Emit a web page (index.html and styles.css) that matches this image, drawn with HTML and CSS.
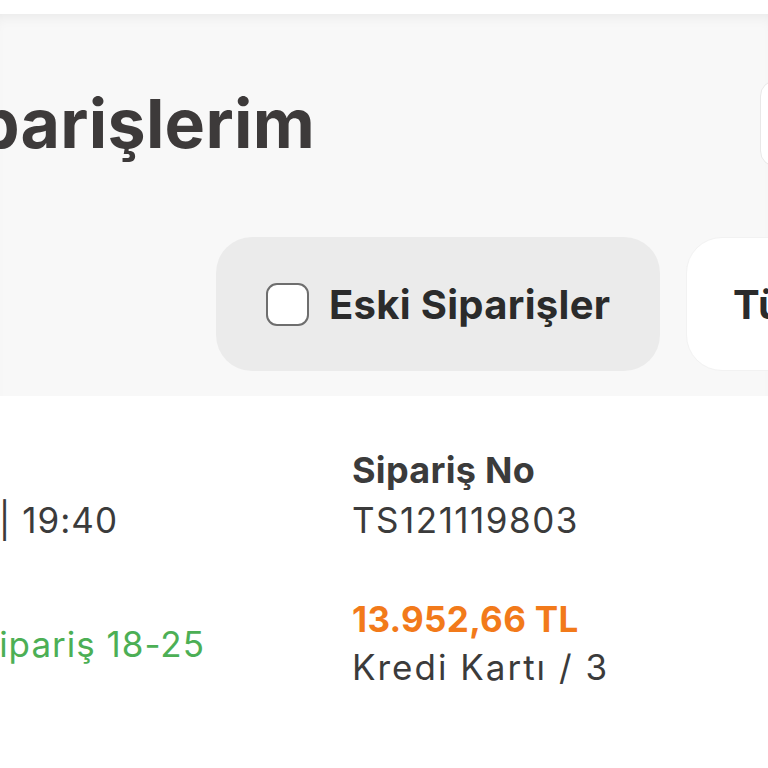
FILE: index.html
```html
<!DOCTYPE html>
<html lang="tr">
<head>
<meta charset="utf-8">
<link rel="stylesheet" href="styles.css">
</head>
<body>
<div class="topbar"></div>
<header class="header">
  <div class="title-row">
    <div class="title-wrap"><h1 class="title">Siparişlerim</h1></div>
    <div class="search-box"></div>
  </div>
  <div class="filter-row">
    <label class="pill pill-old">
      <span class="checkbox"></span>
      <span class="pill-text">Eski Siparişler</span>
    </label>
    <div class="pill pill-all"><span class="pill-text">Tüm Siparişler</span></div>
  </div>
</header>
<main class="content">
  <div class="order-grid">
    <div class="cell-left cell-date"><span class="date">14 Kasım 2024 | 19:40</span></div>
    <div class="cell-right">
      <div class="label">Sipariş No</div>
      <div class="value">TS121119803</div>
    </div>
    <div class="cell-left cell-status"><span class="status">Sipariş 18-25</span></div>
    <div class="cell-right">
      <div class="price">13.952,66 TL</div>
      <div class="value value-pay">Kredi Kartı / 3</div>
    </div>
  </div>
</main>
</body>
</html>
```

FILE: styles.css
```css
* { box-sizing: border-box; }
html, body { margin: 0; padding: 0; }
body {
  width: 768px;
  height: 768px;
  overflow: hidden;
  background: #ffffff;
  font-family: Inter, "Noto Sans", sans-serif;
  color: #3b3b3b;
}
.topbar { height: 14px; background: #ffffff; }
.header {
  background: #f8f8f8;
  box-shadow: inset 0 10px 14px -8px rgba(0,0,0,0.07);
  height: 382px;
  padding-top: 69px;
}
.title-row {
  display: flex;
  align-items: flex-start;
  justify-content: space-between;
  height: 154px;
}
.title-wrap {
  width: 315px;
  display: flex;
  justify-content: flex-end;
  white-space: nowrap;
}
.title {
  margin: 0;
  font-size: 68px;
  line-height: 80px;
  font-weight: 700;
  color: #3d3a3a;
  letter-spacing: 0.3px;
}
.search-box {
  width: 40px;
  height: 87px;
  margin-top: -3px;
  margin-right: -32px;
  background: #ffffff;
  border: 1px solid #e8e8e8;
  border-radius: 16px;
}
.filter-row {
  display: flex;
  gap: 26px;
  padding-left: 216px;
}
.pill {
  flex: none;
  height: 134px;
  border-radius: 36px;
  display: flex;
  align-items: center;
  white-space: nowrap;
}
.pill-old {
  width: 444px;
  background: #ebebeb;
  padding-left: 50px;
  gap: 20px;
}
.pill-all {
  width: 400px;
  background: #ffffff;
  border: 1px solid #f2f2f2;
  padding-left: 46px;
}
.checkbox {
  width: 43px;
  height: 43px;
  border: 2.5px solid #6e6e6e;
  border-radius: 11px;
  background: #ffffff;
  flex: none;
}
.pill-text {
  font-size: 40px;
  font-weight: 700;
  color: #2b2b2b;
  letter-spacing: 0.3px;
}
.content { padding-top: 51px; }
.order-grid {
  display: grid;
  grid-template-columns: 352px 1fr;
  row-gap: 49px;
}
.cell-left {
  display: flex;
  justify-content: flex-end;
  white-space: nowrap;
}
.cell-date { align-items: flex-end; padding-right: 234px; }
.cell-status { align-items: center; padding-right: 147px; }
.date { font-size: 35px; line-height: 54px; color: #3b3b3b; letter-spacing: 1px; }
.status { font-size: 35px; line-height: 44px; color: #4caf55; letter-spacing: 1px; }
.label { font-size: 36px; line-height: 46px; font-weight: 700; color: #3b3b3b; letter-spacing: 0.3px; }
.value { font-size: 35px; line-height: 54px; color: #3b3b3b; letter-spacing: 1.5px; }
.value-pay { line-height: 48px; letter-spacing: 2px; }
.price { font-size: 35px; line-height: 47px; font-weight: 700; color: #f27a1a; letter-spacing: 0.3px; }
```
